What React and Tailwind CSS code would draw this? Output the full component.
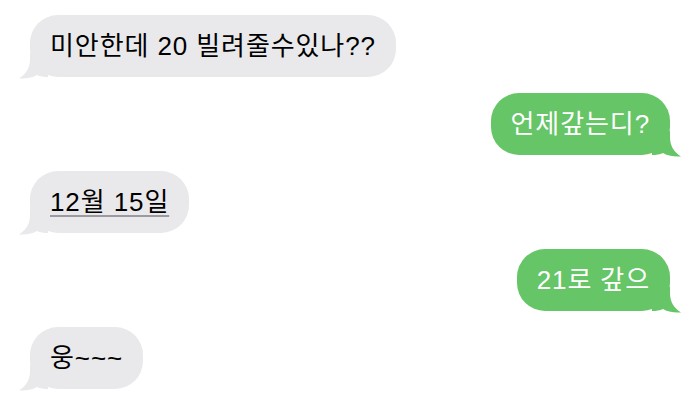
const messages = [
  { id: 1, from: 'them', text: '미안한데 20 빌려줄수있나??' },
  { id: 2, from: 'me', text: '언제갚는디?' },
  { id: 3, from: 'them', text: '12월 15일', link: true },
  { id: 4, from: 'me', text: '21로 갚으' },
  { id: 5, from: 'them', text: '웅~~~' },
];

const Tail = ({ mine }) => (
  <svg
    width="30"
    height="26"
    viewBox="0 0 30 26"
    className={
      mine
        ? 'absolute -right-[12px] -bottom-[2px] -scale-x-100 fill-[#66c566]'
        : 'absolute -left-[12px] -bottom-[2px] fill-[#e9e9eb]'
    }
  >
    <path d="M12 0 L30 0 L30 24 C26 24 22 23.5 19 22 C15 24.5 9 26 1 25.5 C8 21 12 15 12 6 Z" />
  </svg>
);

const Bubble = ({ msg }) => {
  const mine = msg.from === 'me';
  return (
    <div className={`flex ${mine ? 'justify-end' : 'justify-start'}`}>
      <div
        className={`relative h-[62px] px-[20px] flex items-center rounded-[28px] text-[26px] leading-none tracking-[0.9px] ${
          mine ? 'bg-[#66c566] text-white' : 'bg-[#e9e9eb] text-black'
        }`}
      >
        <Tail mine={mine} />
        <span
          className={`relative ${
            msg.link ? 'underline decoration-[#9a9aa0] decoration-[1.5px] underline-offset-[4px]' : ''
          }`}
        >
          {msg.text}
        </span>
      </div>
    </div>
  );
};

export default function App() {
  return (
    <div
      className="w-[699px] h-[405px] bg-white overflow-hidden flex flex-col gap-[16px] pt-[15px] pl-[30px] pr-[29px]"
      style={{ fontFamily: '"Liberation Sans", "Noto Sans CJK KR", sans-serif' }}
    >
      {messages.map((m) => (
        <Bubble key={m.id} msg={m} />
      ))}
    </div>
  );
}
